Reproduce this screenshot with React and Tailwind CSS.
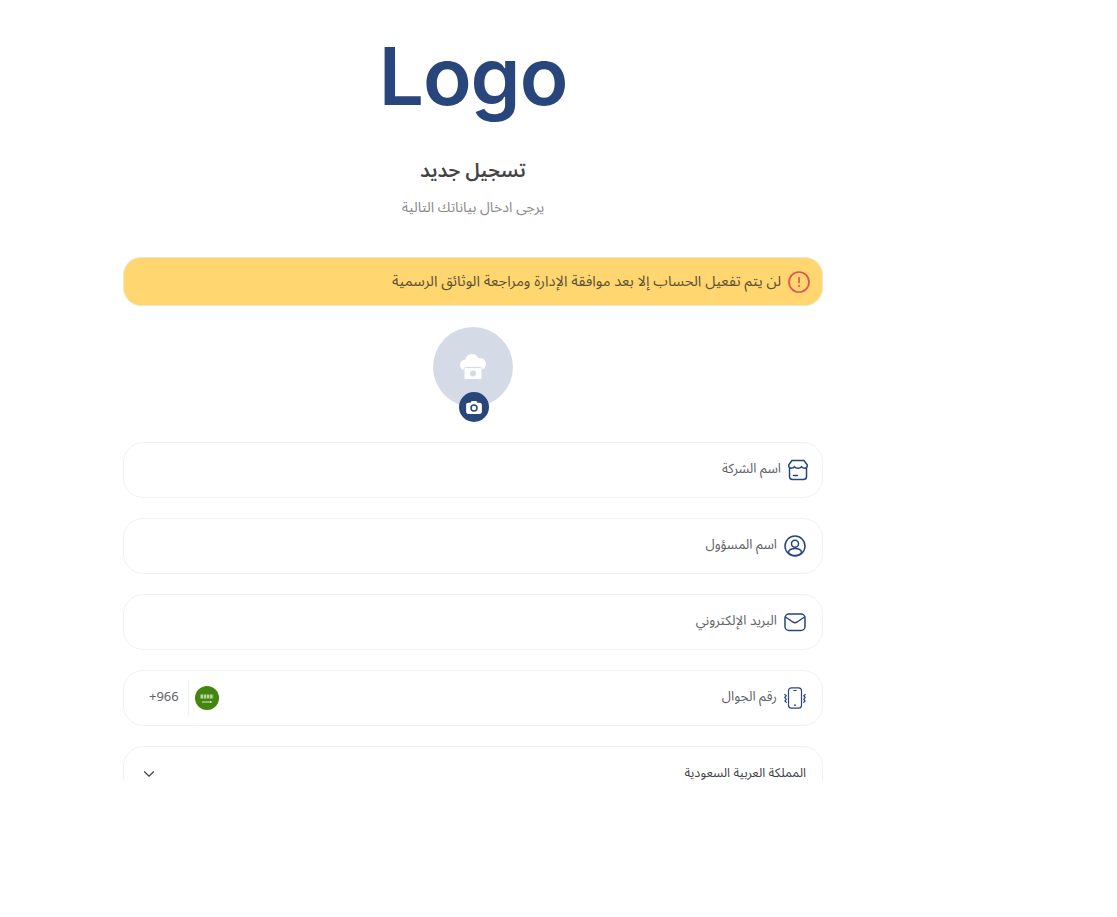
import React from 'react';
import { ChevronDown } from 'lucide-react';

const fontStack = "font-['Noto_Sans','Noto_Sans_Arabic','DejaVu_Sans',sans-serif]";

function StoreIcon() {
  return (
    <svg width="22" height="22" viewBox="0 0 22 22" fill="none" stroke="#28457c" strokeWidth="1.5" strokeLinecap="round" strokeLinejoin="round" className="-mr-[3px] -ml-px shrink-0">
      <path d="M5 1.500h12l3.200 4.200c.6 1.800-.8 3.600-2.700 3.600-1.300 0-2.300-.7-2.900-1.700-.6 1-1.900 1.700-3.600 1.700s-3-.7-3.600-1.700c-.6 1-1.600 1.700-2.900 1.700-1.900 0-3.300-1.800-2.700-3.600z" />
      <path d="M2.500 9v8.500c0 1.700 1 2.900 2.900 2.900h11.200c1.900 0 2.900-1.200 2.900-2.900V9" />
      <path d="M6.500 16.500h4" />
    </svg>
  );
}

function UserIcon() {
  return (
    <svg width="22" height="22" viewBox="0 0 22 22" fill="none" stroke="#28457c" strokeWidth="1.500" strokeLinecap="round" strokeLinejoin="round" className="shrink-0">
      <circle cx="11" cy="11" r="10" />
      <circle cx="11" cy="8.800" r="3.500" />
      <ellipse cx="11" cy="17" rx="6.500" ry="3.500" />
    </svg>
  );
}

function MailIcon() {
  return (
    <svg width="22" height="22" viewBox="0 0 22 22" fill="none" stroke="#28457c" strokeWidth="1.500" strokeLinecap="round" strokeLinejoin="round" className="shrink-0">
      <rect x="1" y="3" width="20" height="16.500" rx="4" />
      <path d="M1.500 6l7.400 5c1.300.8 2.900.8 4.200 0l7.400-5" />
    </svg>
  );
}

function PhoneIcon() {
  return (
    <svg width="22" height="22" viewBox="0 0 22 22" fill="none" stroke="#28457c" strokeWidth="1.200" strokeLinecap="round" strokeLinejoin="round" className="shrink-0">
      <rect x="4.500" y="0.800" width="13" height="20.400" rx="3" />
      <path d="M9.800 3.500h2.400" />
      <path d="M11 18.200h.01" strokeWidth="1.800" />
      <path d="M.8 7.500l1.500 1.200-1.500 1.800 1.500 1.800-1.500 1.800 1.500 1.200" />
      <path d="M21.200 7.500l-1.500 1.200 1.500 1.800-1.500 1.800 1.500 1.800-1.500 1.200" />
    </svg>
  );
}

function AlertIcon() {
  return (
    <svg width="22" height="22" viewBox="0 0 22 22" fill="none" stroke="#e0524d" strokeWidth="1.700" strokeLinecap="round" className="shrink-0">
      <circle cx="11" cy="11" r="10" />
      <path d="M11 6.800v4.700" />
      <path d="M11 15h.01" strokeWidth="2" />
    </svg>
  );
}

function CloudCamera() {
  return (
    <svg width="28" height="28" viewBox="0 0 28 28" fill="none">
      <circle cx="6.500" cy="12" r="5.500" fill="#ffffff" />
      <circle cx="13" cy="8" r="7" fill="#ffffff" />
      <circle cx="21" cy="11" r="6" fill="#ffffff" />
      <rect x="6" y="10" width="16" height="7" fill="#ffffff" />
      <rect x="5" y="14.500" width="18" height="12" rx="1.500" fill="#ffffff" stroke="#d4dbe6" strokeWidth="1" />
      <circle cx="14" cy="20.500" r="3" fill="#d4dbe6" />
    </svg>
  );
}

function CameraBadge() {
  return (
    <svg width="16" height="14" viewBox="0 0 18 16" fill="none">
      <path d="M2.500 3h2.700l1-2h5.600l1 2h2.700C16.700 3 18 4 18 5.500v8c0 1.400-1 2.500-2.500 2.500h-13C1 16 0 14.900 0 13.500v-8C0 4 1 3 2.500 3z" fill="#ffffff" />
      <circle cx="9" cy="9.200" r="3.400" fill="#ffffff" stroke="#28457c" strokeWidth="1.700" />
    </svg>
  );
}

function SaudiFlag() {
  return (
    <svg width="24" height="24" viewBox="0 0 24 24" className="-ml-[3px] shrink-0">
      <circle cx="12" cy="12" r="12" fill="#43860f" />
      <path d="M5.500 10.500h13" stroke="#b9d6a0" strokeWidth="4" strokeDasharray="2.500 .7" />
      <path d="M7 16h10" stroke="#ffffff" strokeWidth="0.800" />
      <path d="M15.500 15v2" stroke="#ffffff" strokeWidth="0.600" />
    </svg>
  );
}

function Field({ icon, label, children }) {
  return (
    <div className="flex h-14 w-full shrink-0 items-center justify-between rounded-[20px] border border-[#f0f1f3] bg-white px-4">
      <div className="flex items-center gap-[7px]">
        {icon}
        <span className="pb-[2px] text-[13.3px] text-[#5f6268]">{label}</span>
      </div>
      {children}
    </div>
  );
}

export default function App() {
  return (
    <div dir="ltr" className={`${fontStack} h-[917px] w-full bg-white`}>
      <div dir="rtl" className="flex h-[780px] w-[946px] flex-col items-center overflow-hidden">
        <h1 dir="ltr" className="mt-[23px] shrink-0 font-['Inter',sans-serif] text-[80px] leading-[106px] font-semibold tracking-[-1px] text-[#28457c]">Logo</h1>
        <h2 className="mt-[25px] shrink-0 text-[19.500px] leading-8 font-semibold text-[#444444]">تسجيل جديد</h2>
        <p className="mt-[9px] shrink-0 text-[14.200px] leading-6 text-[#8a8a8a]">يرجى ادخال بياناتك التالية</p>

        <div className="mt-[38px] flex h-[49px] w-[700px] shrink-0 items-center gap-[7px] rounded-[18px] border border-[#f1e6c8] bg-[#ffd670] px-3">
          <AlertIcon />
          <span className="pb-[2px] text-[14.700px] text-[#5c5237]">لن يتم تفعيل الحساب إلا بعد موافقة الإدارة ومراجعة الوثائق الرسمية</span>
        </div>

        <div className="relative mt-[21px] flex h-20 w-20 shrink-0 items-center justify-center rounded-full bg-[#d4dbe6]">
          <CloudCamera />
          <div className="absolute -bottom-[15px] left-[26px] flex h-[30px] w-[30px] items-center justify-center rounded-full bg-[#28457c]">
            <CameraBadge />
          </div>
        </div>

        <div className="mt-[35px] flex w-[700px] shrink-0 flex-col gap-5">
          <Field icon={<StoreIcon />} label="اسم الشركة" />
          <Field icon={<UserIcon />} label="اسم المسؤول" />
          <Field icon={<MailIcon />} label="البريد الإلكتروني" />
          <Field icon={<PhoneIcon />} label="رقم الجوال">
            <div className="flex h-9 items-center gap-[9px]">
              <SaudiFlag />
              <div className="h-9 w-px bg-[#f0f1f3]" />
              <span dir="ltr" className="pb-[2px] pl-[9px] text-[13px] text-[#5f6268]">+966</span>
            </div>
          </Field>
          <div className="flex h-[100px] w-full shrink-0 items-start justify-between rounded-[20px] border border-[#f0f1f3] bg-white px-4 pt-[15px]">
            <span className="text-[12.700px] leading-5 text-[#3f4247]">المملكة العربية السعودية</span>
            <ChevronDown size={18} strokeWidth={1.5} className="mt-[3px] text-[#3f4247]" />
          </div>
        </div>
      </div>
    </div>
  );
}
